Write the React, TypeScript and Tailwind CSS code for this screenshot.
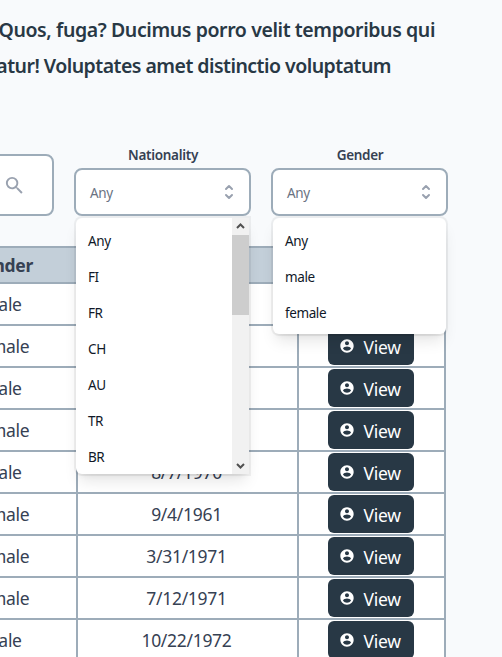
import React from "react";

const rows = [
  { gender: "male", date: "5/12/1968" },
  { gender: "female", date: "2/18/1975" },
  { gender: "male", date: "11/3/1959" },
  { gender: "female", date: "4/26/1982" },
  { gender: "male", date: "8/7/1970" },
  { gender: "female", date: "9/4/1961" },
  { gender: "female", date: "3/31/1971" },
  { gender: "female", date: "7/12/1971" },
  { gender: "male", date: "10/22/1972" },
];

function Chevrons() {
  return (
    <svg className="h-5 w-5 text-gray-400" viewBox="0 0 20 20" fill="none" stroke="currentColor" strokeWidth="2" strokeLinecap="round" strokeLinejoin="round">
      <path d="M7 7l3-3 3 3m0 6l-3 3-3-3" />
    </svg>
  );
}

function Account() {
  return (
    <svg className="h-4 w-4" viewBox="0 0 24 24" fill="currentColor">
      <path d="M12 2C6.48 2 2 6.48 2 12s4.48 10 10 10 10-4.48 10-10S17.52 2 12 2zm0 3c1.66 0 3 1.34 3 3s-1.34 3-3 3-3-1.34-3-3 1.34-3 3-3zm0 14.2a7.2 7.2 0 0 1-6-3.22c.03-1.99 4-3.08 6-3.08 1.99 0 5.97 1.09 6 3.08a7.2 7.2 0 0 1-6 3.22z" />
    </svg>
  );
}

function Option({ text }: { text: string }) {
  return <li className="flex h-9 items-center px-3 pt-px text-[13.5px] tracking-[-0.4px] text-gray-900">{text}</li>;
}

function Select({ label, children }: { label: string; children: React.ReactNode }) {
  return (
    <div className="relative w-[177px]">
      <div className="flex h-[22px] items-center justify-center pb-[3px] pl-px text-[13.5px] font-semibold tracking-[-0.3px] text-gray-700">{label}</div>
      <button className="flex h-12 w-full items-center justify-between rounded-lg border-2 border-[#9dacb9] bg-white pr-[10px] pl-[14px] text-[13.5px] tracking-[-0.3px] text-gray-500">
        <span className="pt-0.5">Any</span>
        <Chevrons />
      </button>
      {children}
    </div>
  );
}

export default function App() {
  return (
    <div className="h-[657px] w-[502px] overflow-hidden bg-[#f8fafc] font-['Noto_Sans','Open_Sans',sans-serif]">
      <div className="flex h-[146px] flex-col pt-3 text-[19.5px] leading-9 font-semibold tracking-[-0.4px] whitespace-nowrap text-[#283845]">
        <p className="flex w-[435px] justify-end">Quos, fuga? Ducimus porro velit temporibus qui</p>
        <p className="flex w-[391px] justify-end tracking-[-0.53px]">atur! Voluptates amet distinctio voluptatum</p>
      </div>
      <div className="relative z-10 flex h-[100px]">
        <div className="mt-2 -ml-3 flex h-[62px] w-[66px] items-center justify-end rounded-lg border-2 border-[#9dacb9] bg-white pr-[26px]">
          <svg className="h-[23px] w-[23px] text-gray-400" viewBox="0 0 24 24" fill="currentColor">
            <path d="M15.5 14h-.79l-.28-.27A6.471 6.471 0 0 0 16 9.5 6.5 6.5 0 1 0 9.5 16c1.61 0 3.09-.59 4.23-1.57l.27.28v.79l5 4.99L20.49 19l-4.99-5zm-6 0C7.01 14 5 11.99 5 9.5S7.01 5 9.5 5 14 7.01 14 9.5 11.99 14 9.5 14z" />
          </svg>
        </div>
        <div className="flex gap-5 pl-5">
          <Select label="Nationality">
            <div className="absolute top-[72px] left-[2px] flex h-64 w-[173px] overflow-hidden rounded-l-md bg-white shadow-lg ring-2 ring-black/5">
              <ul className="flex-1 py-[5px]">
                {["Any", "FI", "FR", "CH", "AU", "TR", "BR"].map((n) => <Option key={n} text={n} />)}
              </ul>
              <div className="flex w-[17px] flex-col bg-[#f1f1f1] text-[#505050]">
                <svg className="h-[17px] w-[17px]" viewBox="0 0 17 17" fill="none" stroke="currentColor" strokeWidth="2"><path d="M5 10l3.5-3.5L12 10" /></svg>
                <div className="h-20 bg-[#cdcdcd]" />
                <svg className="mt-auto h-[17px] w-[17px]" viewBox="0 0 17 17" fill="none" stroke="currentColor" strokeWidth="2"><path d="M5 7l3.5 3.5L12 7" /></svg>
              </div>
            </div>
          </Select>
          <Select label="Gender">
            <ul className="absolute top-[72px] left-[2px] h-[116px] w-[173px] rounded-md bg-white py-[5px] shadow-lg ring-2 ring-black/5">
              {["Any", "male", "female"].map((n) => <Option key={n} text={n} />)}
            </ul>
          </Select>
        </div>
      </div>
      <table className="-ml-[74px] w-[518px] table-fixed border-collapse bg-white text-center text-[17.5px] leading-6 tracking-[-0.3px] text-gray-700">
        <colgroup>
          <col className="w-[150px]" />
          <col className="w-[221px]" />
          <col className="w-[147px]" />
        </colgroup>
        <thead>
          <tr className="h-9 bg-[#c3cfd9]">
            <th className="border-y-2 border-[#9dacb9] p-0 font-bold">Gender</th>
            <th className="border-y-2 border-[#9dacb9] p-0">Date</th>
            <th className="border-2 border-l-0 border-[#9dacb9] p-0">Action</th>
          </tr>
        </thead>
        <tbody>
          {rows.map((r) => (
            <tr key={r.date} className="h-[42px]">
              <td className="border-2 border-[#9dacb9] p-0">{r.gender}</td>
              <td className="border-2 border-[#9dacb9] p-0 pr-0.5">{r.date}</td>
              <td className="border-2 border-[#9dacb9] p-0 pr-0.5">
                <button className="mx-auto flex h-[38px] w-[86px] items-center rounded-md bg-[#283845] pl-[11px] text-white">
                  <Account />
                  <span className="pt-px pl-[9px]">View</span>
                </button>
              </td>
            </tr>
          ))}
        </tbody>
      </table>
    </div>
  );
}
